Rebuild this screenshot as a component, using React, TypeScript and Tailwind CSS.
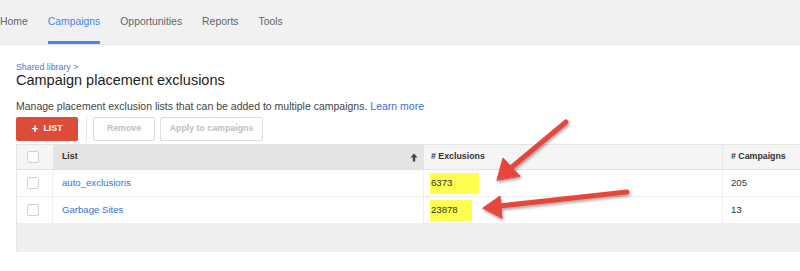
import React from "react";

const navItems = ["Home", "Campaigns", "Opportunities", "Reports", "Tools"];

const rows = [
  { name: "auto_exclusions", exclusions: "6373", campaigns: "205", mark: "w-[49px]" },
  { name: "Garbage Sites", exclusions: "23878", campaigns: "13", mark: "w-[42px]" },
];

const cols = "grid grid-cols-[36px_371px_299px_220px]";

function Checkbox() {
  return <span className="block w-[12px] h-[12px] border border-[#d0d0d0] rounded-[2px] bg-white" />;
}

// red annotation arrows drawn over the table
function Arrows() {
  return (
    <svg className="absolute left-0 top-0 pointer-events-none" width="800" height="271">
      <defs>
        <filter id="sh" x="-20%" y="-20%" width="140%" height="140%">
          <feDropShadow dx="1" dy="2" stdDeviation="1.5" floodColor="#000" floodOpacity="0.35" />
        </filter>
      </defs>
      <g filter="url(#sh)" fill="#e5473d" stroke="#e5473d" strokeLinecap="round">
        <line x1="566" y1="122" x2="512" y2="167" strokeWidth="5" />
        <polygon points="497,180 503,158 520,176" strokeWidth="1" strokeLinejoin="round" />
        <line x1="627" y1="192" x2="500" y2="206" strokeWidth="5" />
        <polygon points="483,208 500,196 502,218" strokeWidth="1" strokeLinejoin="round" />
      </g>
    </svg>
  );
}

export default function App() {
  return (
    <div className="relative w-[800px] h-[271px] overflow-hidden bg-white font-['Liberation_Sans',Arial,sans-serif]">
      {/* top nav */}
      <nav className="h-[45px] bg-[#f1f1f1] border-b border-[#e4e4e4] flex gap-5 text-[10.4px]">
        {navItems.map((item) => (
          <div
            key={item}
            className={
              item === "Campaigns"
                ? "h-full flex items-center border-b-[3px] border-[#4285f4] text-[#4d84e6] pt-[3px]"
                : "h-full flex items-center border-b-[3px] border-transparent text-[#666] pt-[3px]"
            }
          >
            {item}
          </div>
        ))}
      </nav>

      <div className="pl-4">
        <div className="pt-[17px] text-[8.8px] leading-[10px] text-[#4a78d6]">
          Shared library <span className="text-[#777]">&gt;</span>
        </div>
        <h1 className="text-[14.5px] leading-[17px] text-[#222]">Campaign placement exclusions</h1>
        <p className="mt-[11px] text-[10.5px] leading-[12px] text-[#444]">
          Manage placement exclusion lists that can be added to multiple campaigns.{" "}
          <span className="text-[#3b6fd6]">Learn more</span>
        </p>

        {/* toolbar */}
        <div className="mt-[5px] flex items-center h-[24px]">
          <button className="h-[24px] w-[62px] bg-[#dd4b39] text-white text-[8.8px] font-bold flex items-center justify-center gap-[5px] rounded-[2px]">
            <span className="text-[12px] leading-none">+</span>
            LIST
          </button>
          <span className="ml-[8px] mr-[6px] w-px h-[24px] bg-[#e6e6e6]" />
          <button className="h-[24px] w-[62px] border border-[#ddd] bg-white text-[#c0c0c0] text-[8.8px] font-bold rounded-[2px]">
            Remove
          </button>
          <button className="ml-[5px] h-[24px] w-[103px] border border-[#ddd] bg-white text-[#c0c0c0] text-[8.8px] font-bold rounded-[2px]">
            Apply to campaigns
          </button>
        </div>

        {/* table */}
        <div className="mt-[3px] w-[926px] border-l border-t border-[#e5e5e5]">
          <div className={`${cols} h-[25px] border-b border-[#e2e2e2] text-[8.8px] font-bold text-[#333]`}>
            <div className="bg-[#f5f5f5] flex items-center pl-[10px]">
              <Checkbox />
            </div>
            <div className="bg-[#e4e4e4] flex items-center justify-between pl-[9px] pr-[6px]">
              List
              <svg width="8" height="9" viewBox="0 0 8 9">
                <path d="M4 0.5 L7.5 4.5 H5.2 V8.5 H2.8 V4.5 H0.5 Z" fill="#444" />
              </svg>
            </div>
            <div className="bg-[#f5f5f5] flex items-center pl-[7px] border-r border-[#e8e8e8]"># Exclusions</div>
            <div className="bg-[#f5f5f5] flex items-center pl-[8px]"># Campaigns</div>
          </div>
          {rows.map((r) => (
            <div key={r.name} className={`${cols} h-[27px] border-b border-[#eeeeee] text-[9.6px] text-[#333]`}>
              <div className="flex items-center pl-[10px] border-r border-[#f0f0f0]">
                <Checkbox />
              </div>
              <div className="flex items-center pl-[9px] text-[#3b6fd6] border-r border-[#f0f0f0]">{r.name}</div>
              <div className="flex items-center pl-[6px] border-r border-[#f0f0f0]">
                <span className={`${r.mark} h-[21px] bg-[#ffff4f] flex items-center pl-[1px]`}>{r.exclusions}</span>
              </div>
              <div className="flex items-center pl-[8px]">{r.campaigns}</div>
            </div>
          ))}
          <div className="h-[28px] bg-[#efefef]" />
        </div>
      </div>

      <Arrows />
    </div>
  );
}
